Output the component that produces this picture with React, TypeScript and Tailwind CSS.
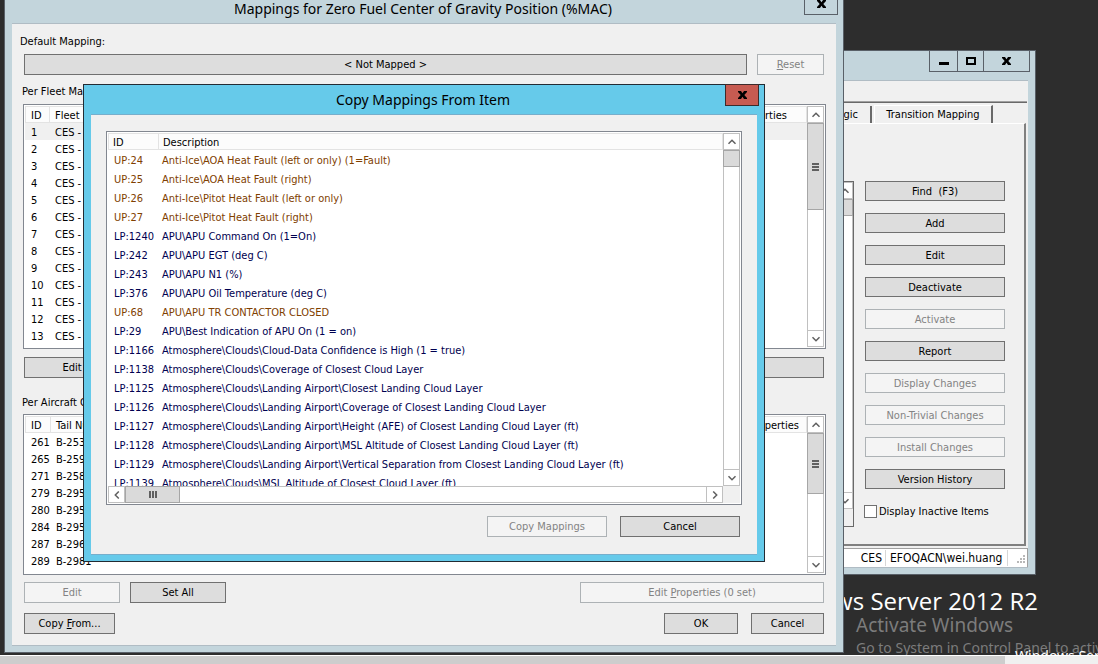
import type { ReactNode } from "react";

type WindowProps = {
  title?: string;
  label: string;
  place: string;
  active?: boolean;
  controls: ReactNode;
  children: ReactNode;
};

function Window({ title, label, place, active, controls, children }: WindowProps) {
  const frame = active ? "border-[#232b33] bg-[#66caea]" : "border-[#596068] bg-[#c3d5dc]";
  const client = active ? "border-[#77aecb]" : "border-[#b0bcc4]";
  return (
    <section aria-label={label} className={`absolute flex flex-col border px-[7px] pb-1.5 ${frame} ${place}`}>
      <header className="flex h-[29px] shrink-0 items-start">
        <div className="w-[30px]" />
        <h2 className="flex-1 pt-1 text-center font-['Noto_Sans',sans-serif] text-sm leading-[22px] text-black">{title}</h2>
        <div className="-mt-px -mr-0.5 flex">{controls}</div>
      </header>
      <div className={`flex min-h-0 flex-1 flex-col border-y bg-[#f0f0f0] ${client}`}>{children}</div>
    </section>
  );
}

function CloseGlyph() {
  return (
    <svg width="9" height="8" viewBox="0 0 9 8" aria-hidden="true">
      <path d="M0 0h3l1.5 2.2L6 0h3v1L6.3 4 9 7v1H6L4.5 5.8 3 8H0V7l2.7-3L0 1z" fill="#000" />
    </svg>
  );
}

function CloseButton({ danger }: { danger?: boolean }) {
  return (
    <button
      aria-label="Close"
      className={`flex h-[22px] w-[34px] items-center justify-center border ${danger ? "border-[#3d2b2b] bg-[#c75b51]" : "border-[#596068]"}`}
    >
      <CloseGlyph />
    </button>
  );
}

function Btn({ children, size, off }: { children: ReactNode; size: string; off?: boolean }) {
  return (
    <button
      disabled={off}
      className={`flex shrink-0 items-center justify-center border whitespace-pre ${size} ${
        off ? "border-[#adb2b5] bg-[#f4f4f4] text-[#838383]" : "border-[#707070] bg-[#dddddd] text-black"
      }`}
    >
      {children}
    </button>
  );
}

const arrows = {
  up: "M1.5 5.8l3.5-3.5 3.5 3.5",
  down: "M1.5 2.2l3.5 3.5 3.5-3.5",
  left: "M6.8 .5L3.3 4l3.5 3.5",
  right: "M3.2 .5L6.7 4 3.2 7.5",
};

function ArrowButton({ dir }: { dir: keyof typeof arrows }) {
  return (
    <button aria-label={`Scroll ${dir}`} className="flex size-[17px] shrink-0 items-center justify-center border border-[#c0c0c0] bg-white">
      <svg width="10" height="8" viewBox="0 0 10 8" aria-hidden="true">
        <path d={arrows[dir]} fill="none" stroke="#606060" strokeWidth="1.5" />
      </svg>
    </button>
  );
}

function VScroll({ thumb, grip }: { thumb: string; grip?: boolean }) {
  return (
    <div className="flex w-[17px] shrink-0 flex-col bg-white">
      <ArrowButton dir="up" />
      <div className="flex-1 border-x border-[#c0c0c0]">
        <div className={`-mx-px flex flex-col items-center justify-center gap-px border border-[#a6a6a6] bg-[#dadada] ${thumb}`}>
          {grip && [0, 1, 2].map((i) => <span key={i} className="h-0.5 w-[7px] bg-[#606060]" />)}
        </div>
      </div>
      <ArrowButton dir="down" />
    </div>
  );
}

const th = "border-y border-r border-[#e3e3e3] bg-[#fcfcfc] p-0 pt-0.5 text-left leading-[13px] font-normal whitespace-nowrap first:border-l";

const fleets = [1, 2, 3, 4, 5, 6, 7, 8, 9, 10, 11, 12, 13];
const tails = [
  ["261", "B-2538"],
  ["265", "B-2592"],
  ["271", "B-2589"],
  ["279", "B-2955"],
  ["280", "B-2956"],
  ["284", "B-2958"],
  ["287", "B-2968"],
  ["289", "B-2981"],
];

const items = [
  ["UP:24", "Anti-Ice\\AOA Heat Fault (left or only) (1=Fault)"],
  ["UP:25", "Anti-Ice\\AOA Heat Fault (right)"],
  ["UP:26", "Anti-Ice\\Pitot Heat Fault (left or only)"],
  ["UP:27", "Anti-Ice\\Pitot Heat Fault (right)"],
  ["LP:1240", "APU\\APU Command On (1=On)"],
  ["LP:242", "APU\\APU EGT (deg C)"],
  ["LP:243", "APU\\APU N1 (%)"],
  ["LP:376", "APU\\APU Oil Temperature (deg C)"],
  ["UP:68", "APU\\APU TR CONTACTOR CLOSED"],
  ["LP:29", "APU\\Best Indication of APU On (1 = on)"],
  ["LP:1166", "Atmosphere\\Clouds\\Cloud-Data Confidence is High (1 = true)"],
  ["LP:1138", "Atmosphere\\Clouds\\Coverage of Closest Cloud Layer"],
  ["LP:1125", "Atmosphere\\Clouds\\Landing Airport\\Closest Landing Cloud Layer"],
  ["LP:1126", "Atmosphere\\Clouds\\Landing Airport\\Coverage of Closest Landing Cloud Layer"],
  ["LP:1127", "Atmosphere\\Clouds\\Landing Airport\\Height (AFE) of Closest Landing Cloud Layer (ft)"],
  ["LP:1128", "Atmosphere\\Clouds\\Landing Airport\\MSL Altitude of Closest Landing Cloud Layer (ft)"],
  ["LP:1129", "Atmosphere\\Clouds\\Landing Airport\\Vertical Separation from Closest Landing Cloud Layer (ft)"],
  ["LP:1139", "Atmosphere\\Clouds\\MSL Altitude of Closest Cloud Layer (ft)"],
];

const sideButtons: [string, boolean][] = [
  ["Find  (F3)", false],
  ["Add", false],
  ["Edit", false],
  ["Deactivate", false],
  ["Activate", true],
  ["Report", false],
  ["Display Changes", true],
  ["Non-Trivial Changes", true],
  ["Install Changes", true],
  ["Version History", false],
];

function ParameterWindow() {
  return (
    <Window
      label="Parameters"
      place="left-[600px] top-[50px] h-[525px] w-[436px]"
      controls={
        <div className="flex h-[22px] divide-x divide-[#596068] border border-[#596068]">
          <button aria-label="Minimize" className="flex w-7 items-center justify-center">
            <span className="mt-1 h-[3px] w-2.5 bg-black" />
          </button>
          <button aria-label="Maximize" className="flex w-[26px] items-center justify-center">
            <span className="h-2 w-2.5 border-2 border-black" />
          </button>
          <button aria-label="Close" className="flex w-[45px] items-center justify-center">
            <CloseGlyph />
          </button>
        </div>
      }
    >
      <div className="h-5 shrink-0" />
      <div className="mr-px h-0.5 shrink-0 border-t border-[#a0a0a0] bg-[#696969]" />
      <div role="tablist" className="mt-0.5 flex h-[18px] shrink-0 justify-end pr-[35px]">
        <button role="tab" aria-selected="false" className="mt-px border-r-2 border-[#696969] pr-3">
          Mapping Logic
        </button>
        <button role="tab" aria-selected="true" className="ml-0.5 w-[119px] border-t border-r-2 border-l border-t-white border-r-[#696969] border-l-white">
          Transition Mapping
        </button>
      </div>
      <div className="mr-0.5 flex min-h-0 flex-1 justify-end border-t border-r-2 border-b-2 border-t-white border-r-[#808080] border-b-[#808080] pr-[18px]">
        <div className="mt-[57px] mb-[17px] flex w-[160px] flex-col border-y border-r border-[#696969]">
          <div className="flex flex-1 justify-end bg-white">
            <VScroll thumb="h-[17px]" />
          </div>
          <div className="h-[17px]" />
        </div>
        <div className="ml-2.5 flex w-[142px] flex-col gap-3 pt-[57px]">
          {sideButtons.map(([text, off]) => (
            <Btn key={text} size="h-5 ml-px w-[140px]" off={off}>
              {text}
            </Btn>
          ))}
          <label className="flex h-5 items-center gap-0.5 whitespace-nowrap">
            <input type="checkbox" className="size-[13px] shrink-0 appearance-none border border-[#707070] bg-white" />
            Display Inactive Items
          </label>
        </div>
      </div>
      <footer className="mt-0.5 flex h-[19px] shrink-0 items-center justify-end border-t border-r border-[#a0a0a0] bg-white text-xs text-black">
        <span className="pr-[3px]">CES</span>
        <span className="w-[123px] border-x border-[#d7d7d7] pl-1 leading-4">EFOQACN\wei.huang</span>
        <svg className="mt-1 ml-2 mr-px" width="10" height="10" viewBox="0 0 10 10" fill="#b8b8b8" aria-hidden="true">
          <path d="M7 0h2v2H7zM4 3h2v2H4zM7 3h2v2H7zM1 6h2v2H1zM4 6h2v2H4zM7 6h2v2H7z" />
        </svg>
      </footer>
    </Window>
  );
}

function ListActions({ off }: { off?: boolean }) {
  return (
    <div className="mr-0.5 ml-px flex gap-2.5">
      <Btn size="h-[21px] w-24" off={off}>
        Edit
      </Btn>
      <Btn size="h-[21px] w-24">Set All</Btn>
      <div className="flex-1" />
      <Btn size="h-[21px] w-[244px]" off={off}>
        <span>
          Edit <u>P</u>roperties (0 set)
        </span>
      </Btn>
    </div>
  );
}

function MappingsWindow() {
  return (
    <Window
      label="Mappings"
      title="Mappings for Zero Fuel Center of Gravity Position (%MAC)"
      place="left-[4px] top-[-7px] h-[660px] w-[840px]"
      controls={<CloseButton />}
    >
      <div className="flex flex-col pr-2.5 pl-[11px]">
        <p className="-ml-[3px] mt-2.5 mb-1 leading-4">Default Mapping:</p>
        <div className="mr-0.5 ml-px flex gap-2.5">
          <button className="flex h-[21px] flex-1 items-center justify-center border border-[#707070] bg-[#dddddd]">&lt; Not Mapped &gt;</button>
          <Btn size="h-[21px] w-[67px]" off>
            <span>
              <u>R</u>eset
            </span>
          </Btn>
        </div>
        <p className="-ml-px mt-[9px] mb-1 leading-4">Per Fleet Mappings:</p>
        <div className="flex h-[245px] border border-[#828790] bg-white p-px">
          <div className="min-w-0 flex-1 overflow-hidden">
            <table className="w-full table-fixed border-separate border-spacing-0">
              <thead>
                <tr className="h-[17px]">
                  <th className={`${th} w-[25px] pl-[5px]`}>ID</th>
                  <th className={`${th} pl-[5px]`}>Fleet</th>
                  <th className={`${th} w-[76px] pl-1.5`}>Properties</th>
                </tr>
              </thead>
              <tbody>
                {fleets.map((n) => (
                  <tr key={n} className={`h-[17px] ${n === 1 ? "bg-[#f0f0f0]" : ""}`}>
                    <td className="p-0 pt-0.5 pl-1.5">{n}</td>
                    <td className="p-0 pt-0.5 pl-[5px]">CES - Fleet {n}</td>
                    <td className="p-0" />
                  </tr>
                ))}
              </tbody>
            </table>
          </div>
          <VScroll thumb="h-[87px]" grip />
        </div>
        <div className="mt-2">
          <ListActions />
        </div>
        <p className="-ml-px mt-[17px] mb-[3px] leading-4">Per Aircraft Overrides:</p>
        <div className="flex h-[161px] border border-[#828790] bg-white p-px">
          <div className="min-w-0 flex-1 overflow-hidden">
            <table className="w-full table-fixed border-separate border-spacing-0">
              <thead>
                <tr className="h-[17px]">
                  <th className={`${th} w-[26px] pl-[5px]`}>ID</th>
                  <th className={`${th} pl-[5px]`}>Tail Number</th>
                  <th className={`${th} w-[63px] pl-[5px]`}>Properties</th>
                </tr>
              </thead>
              <tbody>
                {tails.map(([id, tail]) => (
                  <tr key={id} className="h-[17px]">
                    <td className="p-0 pt-0.5 pl-1.5">{id}</td>
                    <td className="p-0 pt-0.5 pl-[5px]">{tail}</td>
                    <td className="p-0" />
                  </tr>
                ))}
              </tbody>
            </table>
          </div>
          <VScroll thumb="h-[61px]" grip />
        </div>
        <div className="mt-[7px]">
          <ListActions off />
        </div>
        <div className="mt-2.5 mr-0.5 ml-px flex">
          <Btn size="h-[21px] w-[91px]">
            <span>
              Copy <u>F</u>rom...
            </span>
          </Btn>
          <div className="flex-1" />
          <Btn size="h-[21px] w-[74px]">OK</Btn>
          <Btn size="h-[21px] ml-[13px] w-[73px]">Cancel</Btn>
        </div>
      </div>
    </Window>
  );
}

function CopyDialog() {
  return (
    <Window
      active
      label="Copy mappings"
      title="Copy Mappings From Item"
      place="left-[83px] top-[84px] h-[478px] w-[682px]"
      controls={<CloseButton danger />}
    >
      <div className="mx-[15px] mt-4 flex h-[374px] flex-col border border-[#828790] bg-white p-px">
        <div className="flex min-h-0 flex-1">
          <div className="min-w-0 flex-1 overflow-hidden">
            <table className="w-full table-fixed border-separate border-spacing-0">
              <thead>
                <tr className="h-[17px]">
                  <th className={`${th} w-[51px] pl-1`}>ID</th>
                  <th className={`${th} pl-1`}>Description</th>
                </tr>
              </thead>
              <tbody>
                {items.map(([id, text]) => (
                  <tr key={id} className={`h-[19px] whitespace-nowrap ${id.startsWith("UP") ? "text-[#804000]" : "text-[#000050]"}`}>
                    <td className="p-0 pt-0.5 pl-1.5">{id}</td>
                    <td className="p-0 pt-0.5 pl-[3px]">{text}</td>
                  </tr>
                ))}
              </tbody>
            </table>
          </div>
          <VScroll thumb="h-[17px]" />
        </div>
        <div className="flex h-[17px] shrink-0 bg-[#f0f0f0]">
          <ArrowButton dir="left" />
          <div className="flex flex-1 border-y border-[#c0c0c0] bg-white">
            <div className="-my-px flex w-[55px] items-center justify-center gap-px border border-[#a6a6a6] bg-[#dadada]">
              {[0, 1, 2].map((i) => (
                <span key={i} className="h-[7px] w-0.5 bg-[#606060]" />
              ))}
            </div>
          </div>
          <ArrowButton dir="right" />
          <div className="w-[17px]" />
        </div>
      </div>
      <div className="mt-[11px] mr-[17px] flex justify-end gap-[13px]">
        <Btn size="h-[21px] w-[120px]" off>
          Copy Mappings
        </Btn>
        <Btn size="h-[21px] w-[120px]">Cancel</Btn>
      </div>
    </Window>
  );
}

export default function App() {
  return (
    <main className="relative flex h-screen flex-col overflow-hidden bg-[#cdcdcd] font-['DejaVu_Sans_Condensed','Noto_Sans',sans-serif] text-[11px] leading-[15px] text-black">
      <div className="relative flex-1 overflow-hidden bg-[#2d2d2d] font-['Noto_Sans',sans-serif] whitespace-nowrap">
        <p className="absolute top-[585px] right-[60px] font-['Open_Sans',sans-serif] text-2xl text-white">Windows Server 2012 R2</p>
        <div className="absolute top-[613px] left-[856px] text-[#7c7c7c]">
          <p className="text-[19px] leading-6">Activate Windows</p>
          <p className="text-sm leading-[22px]">Go to System in Control Panel to activate Windows.</p>
        </div>
        <p className="absolute top-[646px] left-[1015px] text-sm text-white">Windows Server 2012 R2</p>
      </div>
      <div className="flex h-[9px] shrink-0 border-t border-white">
        <div className="flex-1" />
        <div className="w-[93px] bg-[#f0f0f0]" />
      </div>
      <ParameterWindow />
      <MappingsWindow />
      <CopyDialog />
    </main>
  );
}
